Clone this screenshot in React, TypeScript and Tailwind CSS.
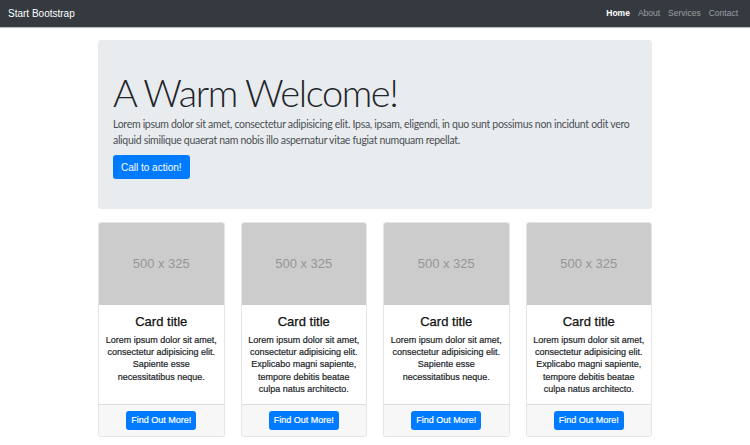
const cards = [
  "Lorem ipsum dolor sit amet, consectetur adipisicing elit. Sapiente esse necessitatibus neque.",
  "Lorem ipsum dolor sit amet, consectetur adipisicing elit. Explicabo magni sapiente, tempore debitis beatae culpa natus architecto.",
  "Lorem ipsum dolor sit amet, consectetur adipisicing elit. Sapiente esse necessitatibus neque.",
  "Lorem ipsum dolor sit amet, consectetur adipisicing elit. Explicabo magni sapiente, tempore debitis beatae culpa natus architecto.",
];

const links = ["Home", "About", "Services", "Contact"];

function Card({ text }: { text: string }) {
  return (
    <div className="flex flex-col overflow-hidden rounded-[3px] border border-black/10 bg-white">
      <div className="flex h-[82px] items-center justify-center bg-[#cccccc] text-[13px] text-[#969696]">
        500 x 325
      </div>
      <div className="flex-1 px-[6.5px] pb-[9px] pt-[9px] text-center">
        <h4 className="text-[13px] leading-[16px] text-[#111] [-webkit-text-stroke:0.25px_#111]">
          Card title
        </h4>
        <p className="mt-[4px] text-[9px] leading-[12.2px] text-[#212529] [-webkit-text-stroke:0.2px_#212529]">
          {text}
        </p>
      </div>
      <div className="flex h-[32px] items-center justify-center border-t border-black/10 bg-[#f7f7f7]">
        <button className="h-[19px] rounded-[3px] bg-[#007bff] px-[5px] text-[9px] text-white [-webkit-text-stroke:0.2px_white]">
          Find Out More!
        </button>
      </div>
    </div>
  );
}

export default function App() {
  return (
    <div className="min-h-[445px] bg-white font-['Liberation_Sans',Arial,sans-serif]">
      <nav className="flex h-[27px] items-center justify-between bg-[#343a40] pl-[8px] pr-[12px] shadow-[0_1px_1px_rgba(0,0,0,0.25)]">
        <span className="text-[10px] text-white">Start Bootstrap</span>
        <ul className="flex gap-[8px] text-[8.5px]">
          {links.map((l, i) => (
            <li key={l} className={i === 0 ? "font-bold text-white" : "text-white/50"}>
              {l}
            </li>
          ))}
        </ul>
      </nav>

      <main className="mx-auto w-[554px] pt-[13px]">
        <header className="h-[169px] rounded-[3px] bg-[#e9ecef] px-[15px] pt-[30px]">
          <h1 className="font-['Lato',sans-serif] text-[38px] font-light leading-[44px] tracking-[-1.4px] text-[#212529]">
            A Warm Welcome!
          </h1>
          <p className="mt-[3px] font-['Lato',sans-serif] text-[10.5px] font-normal leading-[15.5px] tracking-[-0.3px] text-[#4a4f54]">
            Lorem ipsum dolor sit amet, consectetur adipisicing elit. Ipsa, ipsam, eligendi, in quo sunt possimus non incidunt odit vero aliquid similique quaerat nam nobis illo aspernatur vitae fugiat numquam repellat.
          </p>
          <button className="mt-[7px] h-[24px] rounded-[3px] bg-[#007bff] px-[8px] text-[10px] text-white">
            Call to action!
          </button>
        </header>

        <section className="mt-[13px] grid grid-cols-4 gap-4">
          {cards.map((t, i) => (
            <Card key={i} text={t} />
          ))}
        </section>
      </main>
    </div>
  );
}
